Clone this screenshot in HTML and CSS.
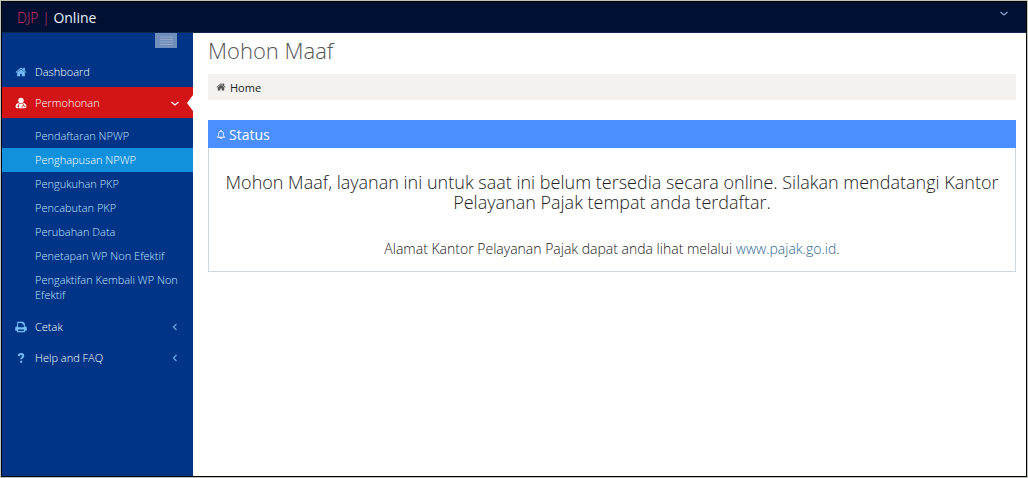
FILE: index.html
```html
<!DOCTYPE html>
<html lang="id">
<head>
<meta charset="utf-8">
<title>DJP Online</title>
<link rel="stylesheet" href="styles.css">
</head>
<body>
<svg class="defs" aria-hidden="true">
  <symbol id="home" viewBox="0 0 1792 1792"><path d="M1472 992v480q0 26-19 45t-45 19h-384v-384h-256v384h-384q-26 0-45-19t-19-45v-480q0-1 .5-3t.5-3l575-474 575 474q1 2 1 6zm223-69l-62 74q-8 9-21 11h-3q-13 0-21-7l-692-577-692 577q-12 8-24 7-13-2-21-11l-62-74q-8-10-7-23.5t11-21.5l719-599q32-26 76-26t76 26l244 204v-195q0-14 9-23t23-9h192q14 0 23 9t9 23v408l219 182q10 8 11 21.5t-7 23.5z"/></symbol>
  <symbol id="left" viewBox="0 0 12 12"><path d="M7.5 3 4.500 6l3 3" fill="none" stroke="currentColor" stroke-width="1.2"/></symbol>
  <symbol id="down" viewBox="0 0 12 12"><path d="M2.500 5 6 8l3.500-3" fill="none" stroke="currentColor" stroke-width="1.3"/></symbol>
</svg>
<div class="app">
  <header class="topbar">
    <a class="brand" href="#"><span class="brand-mark">DJP |</span> Online</a>
    <button class="user-menu" type="button" aria-label="Menu pengguna"><svg class="chevron"><use href="#down"/></svg></button>
  </header>
  <div class="columns">
    <nav class="sidebar">
      <button class="toggler" type="button" aria-label="Menu"><svg class="bars" viewBox="0 0 13 9"><path d="M0 1h13M0 3.5h13M0 6h13M0 8.5h13" stroke="currentColor"/></svg></button>
      <ul class="menu">
        <li><a class="item" href="#"><svg class="icon"><use href="#home"/></svg><span class="label">Dashboard</span></a></li>
        <li>
          <a class="item item-open" href="#"><svg class="icon" viewBox="0 0 14 14"><path d="M7 .8c2 0 3.2 1.4 3.2 3.3S8.900 7.600 7 7.600 3.800 6 3.800 4.100 5 .8 7 .8z"/><path fill-rule="evenodd" d="M4 6.900C5 8 6 8.300 7 8.300S9 8 10 6.900c2.300.4 3.300 2.200 3.300 4.600 0 1-.6 1.700-1.700 1.700H2.400C1.300 13.200.7 12.500.7 11.500.7 9.100 1.700 7.300 4 6.900zM3.600 8.500v1.400a1.100 1.100 0 1 0 .8 0V8.500zM9.600 8.200v1.300L8 10.500v1.700h.8V11l1.200-.7 1.200.7v1.200h.8v-1.700l-1.600-1V8.200z"/></svg><span class="label">Permohonan</span><svg class="chevron"><use href="#down"/></svg></a>
          <ul class="submenu">
            <li><a class="subitem" href="#">Pendaftaran NPWP</a></li>
            <li><a class="subitem subitem-active" href="#">Penghapusan NPWP</a></li>
            <li><a class="subitem" href="#">Pengukuhan PKP</a></li>
            <li><a class="subitem" href="#">Pencabutan PKP</a></li>
            <li><a class="subitem" href="#">Perubahan Data</a></li>
            <li><a class="subitem" href="#">Penetapan WP Non Efektif</a></li>
            <li><a class="subitem" href="#">Pengaktifan Kembali WP Non Efektif</a></li>
          </ul>
        </li>
        <li><a class="item" href="#"><svg class="icon" viewBox="0 0 14 14"><path fill-rule="evenodd" d="M2.500 1h7L11.500 3v3.500h.5c1 0 1.700.7 1.700 1.700v3.300h-2.200V13h-9v-1.500H.3V8.200c0-1 .7-1.700 1.700-1.700h.5zm1.200 1.200v5h6.600V4H8.500V2.200zm0 7.600v2h6.600v-2z"/></svg><span class="label">Cetak</span><svg class="chevron"><use href="#left"/></svg></a></li>
        <li><a class="item" href="#"><svg class="icon" viewBox="0 0 14 14"><path d="M4.300 4.800C4.500 3 5.500 2.300 7 2.300c1.700 0 2.700.9 2.700 2.200 0 2-2.500 1.900-2.500 4.100" fill="none" stroke="currentColor" stroke-width="2.200"/><path d="M6 10.200h2.400v2.300H6z"/></svg><span class="label">Help and FAQ</span><svg class="chevron"><use href="#left"/></svg></a></li>
      </ul>
    </nav>
    <main class="content">
      <h1 class="title">Mohon Maaf</h1>
      <div class="breadcrumb"><svg class="icon"><use href="#home"/></svg><a href="#">Home</a></div>
      <section class="panel">
        <h2 class="panel-head"><svg class="bell" viewBox="0 0 12 12"><path d="M1.500 9.300C2.900 8 3.200 6.700 3.200 4.700 3.200 3 4.300 2 6 2s2.800 1 2.800 2.700c0 2 .3 3.300 1.700 4.600zM6 2V.7M4.900 9.800c.2 1.500 2 1.500 2.200 0" fill="none" stroke="currentColor" stroke-width="1.200"/></svg>Status</h2>
        <div class="panel-body">
          <h3 class="message">Mohon Maaf, layanan ini untuk saat ini belum tersedia secara online. Silakan mendatangi Kantor Pelayanan Pajak tempat anda terdaftar.</h3>
          <p class="address">Alamat Kantor Pelayanan Pajak dapat anda lihat melalui <a href="#">www.pajak.go.id</a>.</p>
        </div>
      </section>
    </main>
  </div>
</div>
</body>
</html>
```
FILE: styles.css
```css
* { box-sizing: border-box; }
body {
  margin: 0;
  padding: 1px;
  background: #c2c5bb;
  font-family: "Open Sans", sans-serif;
  font-size: 11px;
}
a { color: inherit; text-decoration: none; }
ul { margin: 0; padding: 0; list-style: none; }
button { padding: 0; border: 0; background: none; color: inherit; cursor: pointer; }
svg { fill: currentColor; flex: none; }
.defs { position: absolute; width: 0; height: 0; }
.app {
  display: flex;
  flex-direction: column;
  min-height: calc(100vh - 2px);
  border: 1px solid #000;
  background: #fff;
}
.topbar {
  display: flex;
  align-items: center;
  justify-content: space-between;
  height: 31px;
  padding: 0 16px 0 15px;
  background: #001033;
  border-bottom: 1px solid #10284f;
}
.brand { color: #e8f0fa; font-size: 14px; }
.brand-mark { color: #d83068; font-weight: 300; }
.user-menu { display: flex; margin-bottom: 8px; color: #7fa8d0; }
.chevron { width: 12px; height: 12px; }
.columns { display: flex; flex: 1; }
.sidebar {
  display: flex;
  flex-direction: column;
  flex: none;
  width: 191px;
  background: #003487;
  color: #f4f8ff;
}
.toggler {
  display: flex;
  align-items: center;
  justify-content: center;
  align-self: flex-end;
  width: 22px;
  height: 15px;
  margin-right: 16px;
  background: #718dba;
  color: #91a8ca;
}
.bars { width: 13px; height: 9px; }
.menu { margin-top: 8px; }
.item {
  position: relative;
  display: flex;
  align-items: center;
  gap: 8px;
  height: 31px;
  padding: 0 12px 0 13px;
  color: #fff;
  font-weight: 300;
}
.icon { width: 12px; height: 12px; color: #76bdf8; }
.label { flex: 1; }
.item .chevron { color: #69a9e0; }
.item-open { background: #d31518; }
.item-open .icon, .item-open .chevron { color: #fff; }
.item-open::after {
  content: "";
  position: absolute;
  top: 8px;
  right: 0;
  border: 8px solid transparent;
  border-right: 6px solid #fff;
  border-left: 0;
}
.submenu { padding: 6px 0 4px; }
.subitem {
  display: block;
  padding: 4px 8px 5px 33px;
  line-height: 15px;
  color: #c4e2ff;
  font-weight: 300;
}
.subitem-active { background: #1190dc; color: #fff; }
.content { flex: 1; padding: 0 10px 16px 15px; color: #222; }
.title {
  margin: 0;
  line-height: 34px;
  font-size: 22px;
  font-weight: 300;
  color: #555;
}
.breadcrumb {
  display: flex;
  align-items: center;
  gap: 4px;
  height: 26px;
  margin: 7px 0 20px;
  padding: 0 8px;
  background: #f3f2f1;
}
.breadcrumb .icon { width: 10px; height: 10px; color: #555; }
.panel { border: 1px solid #ccd6dc; }
.panel-head {
  display: flex;
  align-items: center;
  gap: 3px;
  height: 28px;
  margin: -1px -1px 0;
  padding: 0 8px;
  background: #4a8eff;
  color: #fff;
  font-size: 14px;
  font-weight: 400;
}
.bell { width: 10px; height: 11px; }
.panel-body { padding: 24px 8px 12px; text-align: center; }
.message { margin: 0 0 27px; font-size: 18px; line-height: 20px; font-weight: 300; }
.address { margin: 0; font-size: 14px; line-height: 20px; font-weight: 300; }
.address a { color: #2f6a90; }
```
